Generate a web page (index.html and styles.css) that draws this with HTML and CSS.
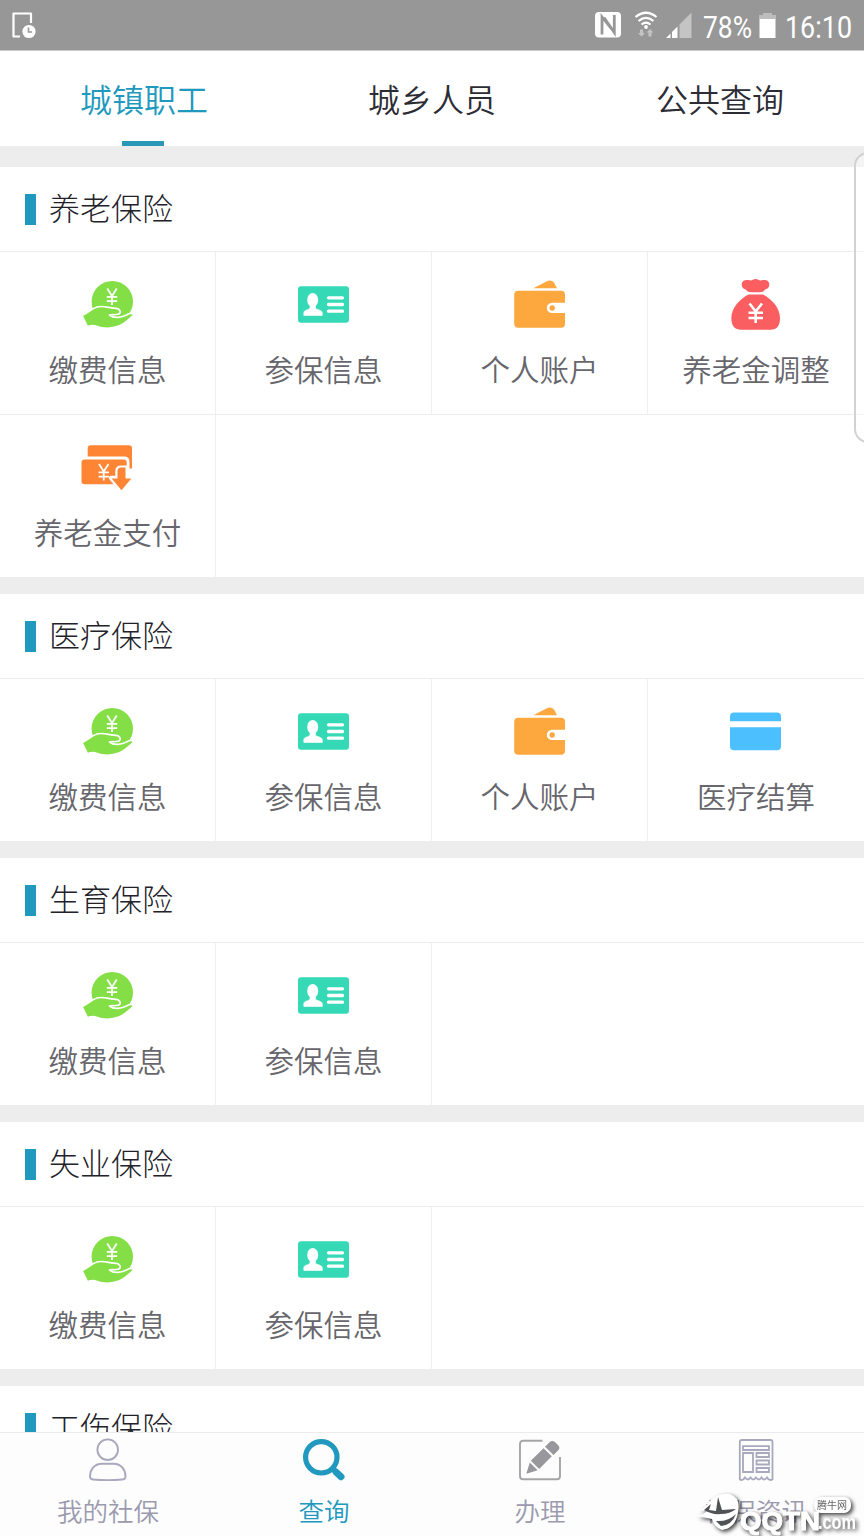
FILE: index.html
```html
<!DOCTYPE html>
<html lang="zh-CN">
  <head>
    <meta charset="UTF-8">
    <meta name="viewport" content="width=device-width, initial-scale=1.0">
    <title>查询</title>
    <link rel="stylesheet" href="styles.css">
  </head>
  <body>
    <!-- shared icons -->
    <svg class="sprite">
      <symbol id="yen" viewBox="0 0 13 19">
        <path d="M1.5 1L6.500 9L11.500 1M6.500 9V18.500M1 10H12M1 14.300H12" fill="none" stroke="#fff" stroke-width="1.900"/>
      </symbol>
      <symbol id="pay" viewBox="0 0 60 60">
        <circle cx="34.300" cy="26.700" r="20.700" fill="#83df45"/>
        <path d="M4 40.500C10 38 14 33.500 19 32C25 30.300 31 33 36 33.200C42.500 33.400 44 38 40 39.300C37 40.300 34 39.200 31.500 40C36 43.800 44 42.500 49 39.800C51.500 38 54.500 38.300 56 40C51 44 47 49.300 40 51.400C34 53.800 25 54 19 51.500C15.500 50 13 50.300 9.500 51.800Z" fill="#83df45" stroke="#fff" stroke-width="1.700" stroke-linejoin="round"/>
        <use href="#yen" x="27.500" y="12.500" width="13" height="18"/>
      </symbol>
      <symbol id="idcard" viewBox="0 0 60 60">
        <rect x="4" y="11.300" width="51" height="36.500" rx="3" fill="#36d9b6"/>
        <ellipse cx="18.700" cy="25" rx="5.500" ry="6.900" fill="#fff"/>
        <path d="M16 29H21.500V33C22 35 28.300 34.500 28.300 38V40.500H9.800V38C9.800 34.500 15.500 35 16 33Z" fill="#fff" stroke="#fff" stroke-width=".6"/>
        <path d="M34.500 22.800H48.500M34.500 29.500H48.500M34.500 36.200H48.500" stroke="#fff" stroke-width="3.300" stroke-linecap="round"/>
      </symbol>
      <symbol id="wallet" viewBox="0 0 60 60">
        <path d="M23.300 13.200L36.500 6.500Q42 3.800 44.300 8L47 13.200Z" fill="#fda73f"/>
        <path d="M8.300 15.700H51Q55 15.700 55 19.700V27.700H42A5.200 5.200 0 0 0 42 38.100H55V48.700Q55 52.700 51 52.700H8.300Q4.200 52.700 4.200 48.700V19.700Q4.200 15.700 8.300 15.700Z" fill="#fda73f"/>
        <circle cx="42.200" cy="33" r="2.700" fill="#fda73f"/>
      </symbol>
      <symbol id="bag" viewBox="0 0 60 60">
        <path d="M22 16.700C20 13.500 15.700 14.500 15.700 9.500C15.700 5.500 20 4.300 23.500 5.300C26 5.800 27 4 29.600 4C32 4 33 5.800 35.700 5.300C39.500 4.300 43.300 5.500 43.300 9.500C43.300 14.500 39 13.500 37 16.700Q29.500 18 22 16.700Z" fill="#fb5e60"/>
        <path d="M22.500 19.500H37C45 23.500 54 32.500 54 43C54 51 50.500 54.800 44.500 54.800H15C9 54.800 5.300 51 5.300 43C5.300 32.500 14.500 23.500 22.500 19.500Z" fill="#fb5e60"/>
        <path d="M23.500 28.500L29.700 36.500L36 28.500M29.700 36V48M22.500 37.700H37M22.500 43H37" fill="none" stroke="#fff" stroke-width="2.600"/>
      </symbol>
      <symbol id="payout" viewBox="0 0 60 60">
        <g transform="translate(0 -5)" fill="#fe8534">
          <path d="M12.700 12.300H51Q54 12.300 54 15.300V35.500H51.500V29Q51.500 23.600 46 23.600H9.700V15.300Q9.700 12.300 12.700 12.300Z"/>
          <path d="M6.500 26.500H45.500Q48.700 26.500 48.700 29.500V32.500H43Q37.300 32.500 37.300 38V42.800H34Q29.500 43 31.500 46.500L35.500 51.300H6.500Q3.500 51.300 3.500 48.300V29.500Q3.500 26.500 6.500 26.500Z"/>
          <path d="M43 34.500H47.500V45.600H53.300L43.500 57.300L33.700 45.600H39.500V38Q39.500 34.500 43 34.500Z"/>
        </g>
        <use href="#yen" x="19.500" y="25" width="12.500" height="18"/>
      </symbol>
      <symbol id="card" viewBox="0 0 60 60">
        <path d="M8 10.500H51Q55 10.500 55 14.500V19.300H4V14.500Q4 10.500 8 10.500ZM4 25.300H55V44.300Q55 48.300 51 48.300H8Q4 48.300 4 44.300Z" fill="#4cbffe"/>
      </symbol>
    </svg>

    <div class="screen">
      <header class="status-bar">
        <svg class="device" width="26" height="28" viewBox="0 0 26 28">
          <path d="M9 25.500H2.500V2.500H20V12" fill="none" stroke="#fff" stroke-width="2.200" stroke-linejoin="round"/>
          <circle cx="18" cy="20.500" r="6.600" fill="#fff"/>
          <path d="M17.500 16.500V21H21" fill="none" stroke="#979797" stroke-width="1.600"/>
        </svg>
        <svg class="nfc" width="26" height="28" viewBox="0 0 26 28">
          <rect y="1" width="26" height="25.500" rx="4" fill="#fff"/>
          <path d="M7 23.500V6L17 18.500M9 6.500L19.300 21.500V4" fill="none" stroke="#979797" stroke-width="2.800"/>
        </svg>
        <svg class="wifi" width="24" height="28" viewBox="0 0 24 28">
          <path d="M1.500 6Q12 -2.500 22.500 6M4.500 10Q12 3.800 19.500 10M7.500 13.500Q12 9.800 16.500 13.500" fill="none" stroke="#fff" stroke-width="2.200"/>
          <circle cx="12" cy="16" r="1.900" fill="#fff"/>
          <path d="M6 18.500H9V22H11L7.500 25.500L4 22H6ZM14.500 25.500V21.500H12.500L16 18L19.500 21.500H17.500V25.500Z" fill="#c4c4c4"/>
        </svg>
        <svg class="signal" width="26" height="28" viewBox="0 0 26 28">
          <path d="M13.500 13.500L25.500 1.500V27H13.500Z" fill="#c4c4c4"/>
          <path d="M0 27L4.500 22.500V27ZM6 27V21L11.500 15.500V27Z" fill="#fff"/>
        </svg>
        <svg class="percent" width="50" height="30" viewBox="0 0 50 30">
          <text x="0" y="27" textLength="49" lengthAdjust="spacingAndGlyphs">78%</text>
        </svg>
        <svg class="battery" width="17" height="28" viewBox="0 0 17 28">
          <path d="M0 8V4H4V2H13V4H17V8Z" fill="#bdbdbd"/>
          <path d="M.5 8H16.500V27H.5Z" fill="#fff"/>
        </svg>
        <svg class="clock" width="68" height="30" viewBox="0 0 68 30">
          <text x="0" y="27" textLength="67" lengthAdjust="spacingAndGlyphs">16:10</text>
        </svg>
      </header>

      <nav class="tabs">
        <a class="tab active">城镇职工</a>
        <a class="tab">城乡人员</a>
        <a class="tab">公共查询</a>
      </nav>

      <main class="content">
        <section class="group">
          <h2>养老保险</h2>
          <div class="grid">
            <a class="cell"><svg><use href="#pay"/></svg>缴费信息</a>
            <a class="cell"><svg><use href="#idcard"/></svg>参保信息</a>
            <a class="cell"><svg><use href="#wallet"/></svg>个人账户</a>
            <a class="cell"><svg><use href="#bag"/></svg>养老金调整</a>
            <a class="cell"><svg><use href="#payout"/></svg>养老金支付</a>
          </div>
        </section>
        <section class="group">
          <h2>医疗保险</h2>
          <div class="grid">
            <a class="cell"><svg><use href="#pay"/></svg>缴费信息</a>
            <a class="cell"><svg><use href="#idcard"/></svg>参保信息</a>
            <a class="cell"><svg><use href="#wallet"/></svg>个人账户</a>
            <a class="cell"><svg><use href="#card"/></svg>医疗结算</a>
          </div>
        </section>
        <section class="group">
          <h2>生育保险</h2>
          <div class="grid">
            <a class="cell"><svg><use href="#pay"/></svg>缴费信息</a>
            <a class="cell"><svg><use href="#idcard"/></svg>参保信息</a>
          </div>
        </section>
        <section class="group">
          <h2>失业保险</h2>
          <div class="grid">
            <a class="cell"><svg><use href="#pay"/></svg>缴费信息</a>
            <a class="cell"><svg><use href="#idcard"/></svg>参保信息</a>
          </div>
        </section>
        <section class="group">
          <h2>工伤保险</h2>
        </section>
      </main>

      <nav class="bottom-nav">
        <a class="nav-item">
          <svg viewBox="0 0 44 44" fill="none" stroke="#a9a8bd" stroke-width="1.900">
            <circle cx="21.700" cy="11.700" r="10.300"/>
            <path d="M16 25.700H27.500C35.500 25.700 39.500 32 39.500 38.500Q39.500 41.200 36.500 41.500Q21.500 42.800 7 41.500Q4 41.200 4 38.500C4 32 8 25.700 16 25.700Z"/>
          </svg>
          我的社保
        </a>
        <a class="nav-item active">
          <svg viewBox="0 0 44 44" fill="none" stroke="#2199be">
            <circle cx="19.300" cy="19.300" r="15.700" stroke-width="5.200"/>
            <path d="M30 30L35 35" stroke-width="5"/>
            <path d="M34 34L39 38.700" stroke-width="7" stroke-linecap="round"/>
          </svg>
          查询
        </a>
        <a class="nav-item">
          <svg viewBox="0 0 44 44">
            <path d="M24.500 2.800H5Q2 2.800 2 5.800V38.200Q2 41.200 5 41.200H39Q42 41.200 42 38.200V19" fill="none" stroke="#a5a5a8" stroke-width="1.900"/>
            <path d="M8.300 35.700L11.800 24.500L19.700 32.300ZM12.800 22.800L25.500 10.200L33.800 18.300L21.200 31ZM27 8.800L31.500 4.300Q33.800 2 37 4L40 7Q42.500 9.500 40.500 12L35.500 17Z" fill="#98989c"/>
          </svg>
          办理
        </a>
        <a class="nav-item">
          <svg viewBox="0 0 44 44" fill="none" stroke="#a9a8bd" stroke-width="1.800">
            <path d="M5.800 41.500V4Q5.800 2 7.800 2H36.500Q38.500 2 38.500 4V41.500Q35 43 33 39.500Q30 43.500 27.500 39.500Q25 43.500 22 39.500Q19.500 43.500 16.500 39.500Q14 43.500 11 39.500Q9 43 5.800 41.500Z"/>
            <path d="M9 8.200H35V12H9ZM9 15H19V34H9ZM22.500 15H35V19H22.500ZM22.500 22.500H35V26.500H22.500ZM22.500 30H35V34H22.500Z"/>
          </svg>
          社保资讯
        </a>
      </nav>

      <div class="edge-handle"></div>

      <svg class="watermark" width="170" height="56" viewBox="0 0 170 56">
        <g fill="#fff">
          <path d="M14 24Q22 12 36 14Q47 18 44 32Q42 48 28 50Q20 47 18 39L3 36Q10 34 13 31L6 30Q11 28 14 24Z"/>
          <rect x="120" y="17" width="37" height="16" rx="7"/>
          <text class="wm-name" x="46" y="50" textLength="80" lengthAdjust="spacingAndGlyphs">QQTN</text>
          <text class="wm-com" x="124" y="49" textLength="38" lengthAdjust="spacingAndGlyphs">.com</text>
        </g>
        <path d="M10 30L17 24L15 30L22 31L24 17L28 30L42 29Q36 34 27 34Q18 35 10 30ZM22 41Q34 42 42 34Q38 45 27 46Z" fill="#505256"/>
        <text class="wm-cn" x="123" y="29">腾牛网</text>
      </svg>
    </div>
  </body>
</html>
```
FILE: styles.css
```css
* {
  box-sizing: border-box;
}

body {
  margin: 0;
  background-color: #fff;
  font-family: "Noto Sans CJK SC", sans-serif;
  font-weight: 350;
}

.sprite {
  display: none;
}

.screen {
  position: relative;
  display: flex;
  flex-direction: column;
  width: 864px;
  height: 1536px;
  overflow: hidden;
  background-color: #ededed;
}

/* Status bar */
.status-bar {
  flex: none;
  display: flex;
  align-items: flex-start;
  height: 51px;
  padding: 11px 11px 0;
  background-color: #979797;
  border-bottom: 1px solid #c9c9c9;
}

.status-bar svg {
  overflow: visible;
}

.status-bar text {
  font-family: Roboto, sans-serif;
  font-size: 31px;
  font-weight: 400;
  fill: #fff;
}

.nfc {
  margin-left: auto;
}

.wifi {
  margin-left: 13px;
}

.signal {
  margin-left: 8px;
}

.percent {
  margin-left: 11px;
}

.battery {
  margin-left: 6px;
}

.clock {
  margin-left: 9px;
}

/* Top tabs */
.tabs {
  flex: none;
  display: flex;
  height: 95px;
  background-color: #fff;
}

.tab {
  flex: 1;
  display: flex;
  flex-direction: column;
  align-items: center;
  justify-content: space-between;
  font-size: 32px;
  line-height: 95px;
  color: #2c2c34;
}

.tab.active {
  color: #2199be;
}

.tab.active::after {
  content: "";
  width: 42px;
  height: 5px;
  margin-top: -5px;
  margin-right: 2px;
  background-color: #2b98b8;
}

/* Insurance groups */
.content {
  flex: 1;
  min-height: 0;
  overflow: hidden;
  padding-top: 21px;
}

.group {
  margin-bottom: 16px;
  background-color: #fff;
  border-bottom: 1px solid #ededed;
}

.group h2 {
  display: flex;
  align-items: center;
  gap: 13px;
  height: 85px;
  margin: 0;
  padding-left: 25px;
  border-bottom: 1px solid #ececec;
  font-size: 31px;
  font-weight: 300;
  line-height: 80px;
  padding-bottom: 4px;
  color: #22222a;
}

.group h2::before {
  content: "";
  width: 11px;
  height: 31px;
  margin-top: 4px;
  background-color: #2199be;
}

.grid {
  display: grid;
  grid-template-columns: repeat(4, 216px);
  margin-bottom: -1px;
}

.cell {
  display: flex;
  flex-direction: column;
  align-items: center;
  height: 163px;
  padding-top: 23px;
  border-right: 1px solid #efefef;
  font-size: 29.500px;
  line-height: 44px;
  color: #66666c;
  white-space: nowrap;
}

.cell:nth-child(4n) {
  border-right: none;
}

.cell:nth-child(-n+4) {
  border-bottom: 1px solid #ededed;
}

.cell svg {
  width: 60px;
  height: 60px;
  margin-bottom: 11px;
}

/* Bottom navigation */
.bottom-nav {
  flex: none;
  display: flex;
  height: 104px;
  padding-top: 5px;
  border-top: 1px solid #ebebeb;
  background-color: #fdfdfd;
}

.nav-item {
  flex: 1;
  display: flex;
  flex-direction: column;
  align-items: center;
  font-size: 25.500px;
  line-height: 38px;
  color: #9b9aae;
}

.nav-item.active {
  color: #2199be;
}

.nav-item svg {
  width: 44px;
  height: 44px;
  margin-bottom: 9px;
}

/* Edge panel handle, sticks out of the right side */
.edge-handle {
  position: absolute;
  top: 152px;
  right: -20px;
  width: 30px;
  height: 291px;
  border: 2px solid #d2d2d2;
  border-radius: 14px;
  background-color: rgba(255, 255, 255, 0.4);
}

.watermark {
  position: absolute;
  right: 0;
  bottom: 0;
  filter: drop-shadow(2px 2px 2px rgba(0, 0, 0, 0.75));
}

.wm-name {
  font-family: "Liberation Sans", sans-serif;
  font-size: 26px;
  font-weight: 700;
  stroke: #fff;
  stroke-width: 1px;
}

.wm-com {
  font-family: "Liberation Sans", sans-serif;
  font-size: 20px;
  font-weight: 700;
}

.wm-cn {
  font-size: 10px;
  font-weight: 400;
  fill: #666;
}
```
